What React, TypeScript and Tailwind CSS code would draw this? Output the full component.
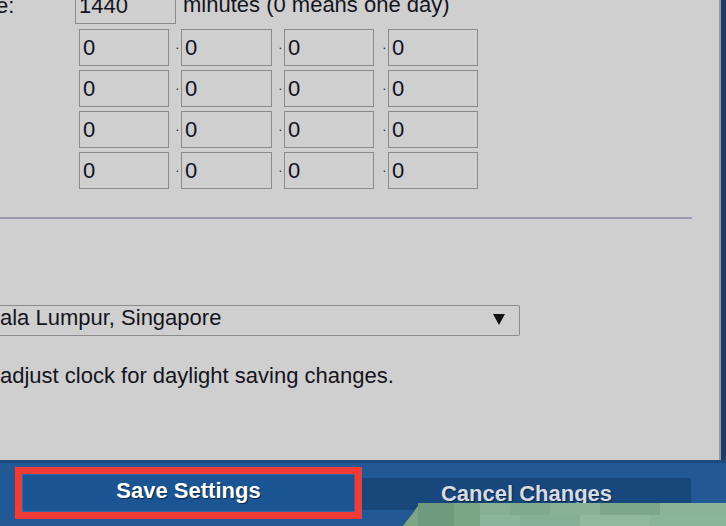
import React from "react";

const font = { fontFamily: '"Liberation Sans", Arial, sans-serif' };

function Box({ w, value }: { w: string; value: string }) {
  return (
    <div
      className={`${w} h-[37px] border border-[#8a8a8a] flex items-center pl-[3px] text-[22px] leading-[25px] text-[#111122]`}
    >
      {value}
    </div>
  );
}

function Dot({ w }: { w: string }) {
  return (
    <div className={`${w} h-[37px] flex justify-end pr-[2px]`}>
      <span className="text-[13px] leading-none pt-[9px] text-[#222]">.</span>
    </div>
  );
}

function IpRow() {
  return (
    <div className="flex ml-[79px]">
      <Box w="w-[90px]" value="0" />
      <Dot w="w-[12px]" />
      <Box w="w-[91px]" value="0" />
      <Dot w="w-[12px]" />
      <Box w="w-[90px]" value="0" />
      <Dot w="w-[14px]" />
      <Box w="w-[90px]" value="0" />
    </div>
  );
}

export default function App() {
  return (
    <div
      className="relative w-[726px] h-[526px] overflow-hidden bg-[#1f3a64] flex flex-col"
      style={font}
    >
      {/* grey panel */}
      <div className="w-[721px] h-[460px] bg-[#cfcfcf] border-r-[2px] border-[#9a9aa6] flex flex-col overflow-hidden text-[#141420]">
        {/* row 0 */}
        <div className="flex mt-[-13px] h-[37px]">
          <div className="w-[79px] text-[22px] leading-[25px] mt-[6px] -ml-[4px]">e:</div>
          <div className="w-[101px] h-[37px] border border-[#8a8a8a] flex items-center pl-[3px] text-[22px] leading-[25px]">
            1440
          </div>
          <div className="ml-[7px] text-[22px] leading-[25px] mt-[5px]">
            minutes (0 means one day)
          </div>
        </div>

        {/* ip rows */}
        <div className="mt-[5px] flex flex-col gap-[4px]">
          <IpRow />
          <IpRow />
          <IpRow />
          <IpRow />
        </div>

        {/* separator */}
        <div className="mt-[28px] w-[692px] h-[2px] bg-[#9a9ab2]" />

        {/* select */}
        <div className="mt-[86px] w-[520px] h-[31px] border border-l-0 border-[#8c8c8c] rounded-r-[2px] flex items-start justify-between">
          <span className="text-[22px] leading-[23px]">ala Lumpur, Singapore</span>
          <span className="mr-[14px] mt-[8px] w-0 h-0 border-l-[6px] border-r-[6px] border-t-[11px] border-l-transparent border-r-transparent border-t-[#111]" />
        </div>

        {/* dst text */}
        <div className="mt-[27px] text-[22px] leading-[25px]">
          adjust clock for daylight saving changes.
        </div>
      </div>

      {/* bottom bar */}
      <div className="w-[726px] h-[66px] bg-[#225893] border-t-[3px] border-[#1d4a7e] flex items-start">
        <div className="ml-[15px] mt-[4px] w-[347px] h-[52px] border-[7px] border-[#f23a36] flex">
          <div className="flex-1 bg-[#1b5593] border border-[#2d6aa6] flex items-start justify-center pt-[3px]">
            <span className="text-white font-bold text-[22px] leading-[25px] [text-shadow:1px_1px_1px_#0b2444]">
              Save Settings
            </span>
          </div>
        </div>
        <div className="mt-[15px] w-[329px] h-[32px] bg-[#17477b] flex items-start justify-center pt-[3px]">
          <span className="text-[#d6dce6] font-bold text-[22px] leading-[25px] [text-shadow:1px_1px_1px_#0b2444]">
            Cancel Changes
          </span>
        </div>
      </div>

      {/* green overlay blob */}
      <svg
        className="absolute left-[400px] top-[502px]"
        width="326"
        height="24"
        viewBox="0 0 326 24"
      >
        <path d="M3 24 L14 10 Q18 2 28 1 L326 2 L326 24 Z" fill="#7ea88b" />
        <rect x="18" y="1" width="36" height="23" fill="#6f9a7d" />
        <rect x="54" y="1" width="26" height="23" fill="#7aa688" />
        <rect x="80" y="1" width="30" height="12" fill="#86af94" />
        <rect x="110" y="1" width="40" height="12" fill="#80aa8e" />
        <rect x="150" y="1" width="50" height="12" fill="#88b196" />
        <rect x="200" y="1" width="60" height="12" fill="#7ca68a" />
        <rect x="260" y="1" width="66" height="12" fill="#8ab398" />
        <rect x="80" y="13" width="40" height="11" fill="#8cb69b" />
        <rect x="120" y="13" width="60" height="11" fill="#86b096" />
        <rect x="180" y="13" width="70" height="11" fill="#90b99e" />
        <rect x="250" y="13" width="76" height="11" fill="#8bb599" />
        <path d="M3 24 L14 10 Q16 6 18 4 L18 24 Z" fill="#7ca487" />
      </svg>
    </div>
  );
}
